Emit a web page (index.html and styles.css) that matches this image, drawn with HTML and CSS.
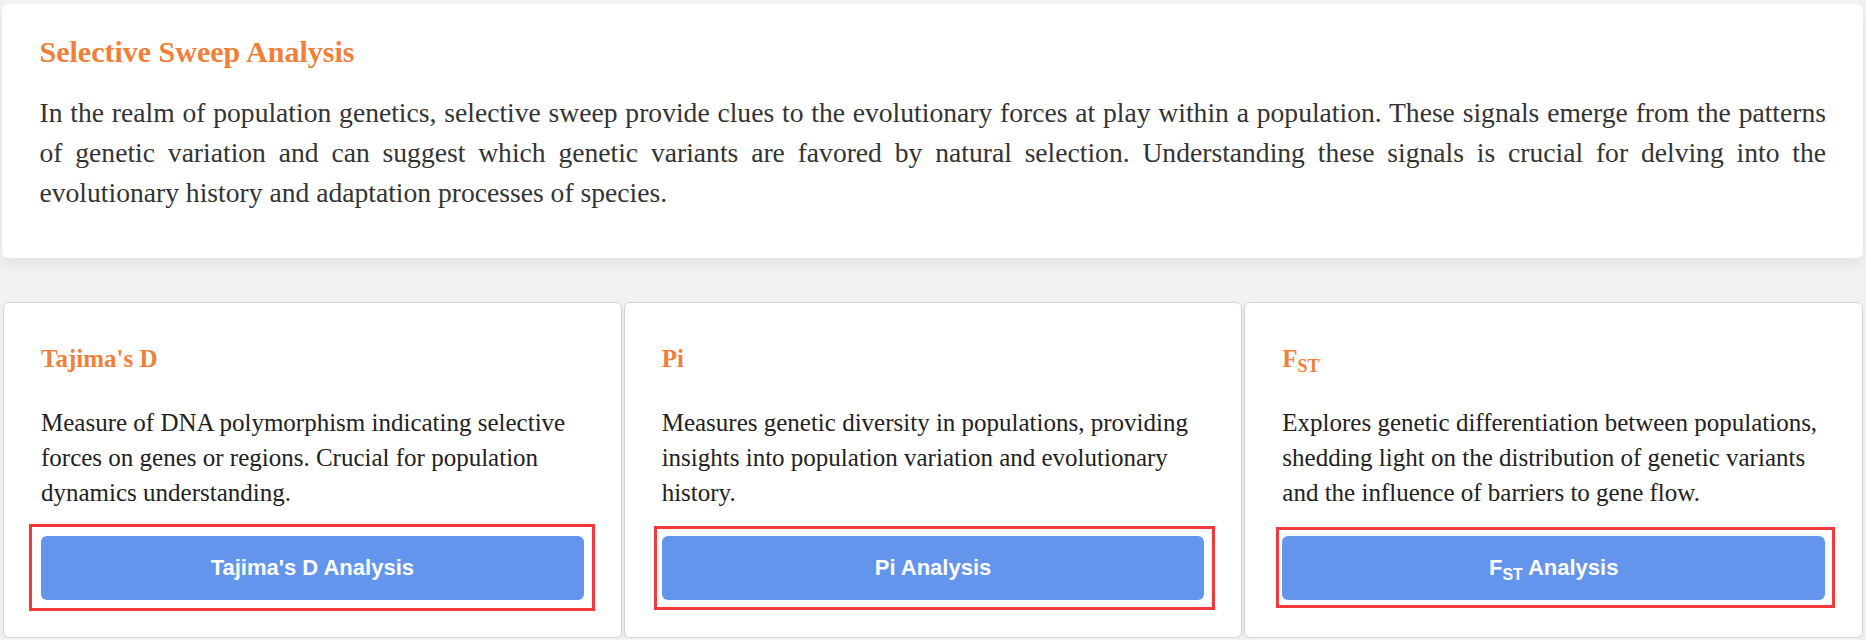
FILE: index.html
```html
<!DOCTYPE html>
<html lang="en">
<head>
<meta charset="utf-8">
<title>Selective Sweep Analysis</title>
<link rel="stylesheet" href="styles.css">
</head>
<body>
<main class="page">
  <section class="intro">
    <h2 class="intro-title">Selective Sweep Analysis</h2>
    <p class="intro-text">In the realm of population genetics, selective sweep provide clues to the evolutionary forces at play within a population. These signals emerge from the patterns of genetic variation and can suggest which genetic variants are favored by natural selection. Understanding these signals is crucial for delving into the evolutionary history and adaptation processes of species.</p>
  </section>
  <section class="cards">
    <article class="card">
      <h3 class="card-title">Tajima's D</h3>
      <p class="card-text">Measure of DNA polymorphism indicating selective forces on genes or regions. Crucial for population dynamics understanding.</p>
      <div class="btn-wrap mark-1"><button class="btn">Tajima's D Analysis</button></div>
    </article>
    <article class="card">
      <h3 class="card-title">Pi</h3>
      <p class="card-text">Measures genetic diversity in populations, providing insights into population variation and evolutionary history.</p>
      <div class="btn-wrap mark-2"><button class="btn">Pi Analysis</button></div>
    </article>
    <article class="card">
      <h3 class="card-title">F<sub>ST</sub></h3>
      <p class="card-text">Explores genetic differentiation between populations, shedding light on the distribution of genetic variants and the influence of barriers to gene flow.</p>
      <div class="btn-wrap mark-3"><button class="btn">F<sub>ST</sub> Analysis</button></div>
    </article>
  </section>
</main>
</body>
</html>
```

FILE: styles.css
```css
* { box-sizing: border-box; }
html, body { margin: 0; padding: 0; }
body {
  background: #f2f2f2;
  font-family: "Liberation Serif", "Times New Roman", serif;
  overflow: hidden;
}
.page {
  padding: 4px 3px 0 2px;
}
.intro {
  background: #fff;
  border-radius: 6px;
  box-shadow: 0 6px 14px rgba(0, 0, 0, 0.07);
  padding: 30px 37px 45px 37.5px;
}
.intro-title {
  margin: 0;
  font-size: 30px;
  line-height: 36px;
  font-weight: bold;
  color: #f07f3a;
}
.intro-text {
  margin: 23px 0 0;
  font-size: 27.6px;
  line-height: 40px;
  color: #333;
  text-align: justify;
}
.cards {
  margin-top: 44px;
  display: grid;
  grid-template-columns: repeat(3, 1fr);
  gap: 2px;
  padding-left: 1px;
}
.card {
  background: #fff;
  border: 1px solid #d4d4d4;
  border-radius: 6px;
  padding: 37px 37px 37px 37px;
  box-shadow: 0 2px 6px rgba(0, 0, 0, 0.05);
}
.card-title {
  margin: 0;
  font-size: 25px;
  line-height: 38px;
  font-weight: bold;
  color: #f07f3a;
}
.card-title sub {
  font-size: 0.72em;
  vertical-align: -0.3em;
  line-height: 0;
}
.card-text {
  margin: 27px 0 0;
  font-size: 25px;
  line-height: 35px;
  color: #222;
}
.btn-wrap {
  position: relative;
  margin-top: 26px;
}
.btn-wrap::after {
  content: "";
  position: absolute;
  border: 3px solid #f23a3a;
  pointer-events: none;
}
.mark-1::after { left: -12px; right: -11px; top: -12px; bottom: -11px; }
.mark-2::after { left: -8px; right: -11px; top: -10px; bottom: -10px; }
.mark-3::after { left: -6px; right: -10px; top: -9px; bottom: -8px; }
.btn {
  display: block;
  width: 100%;
  height: 64px;
  border: none;
  border-radius: 6px;
  background: #6495ed;
  color: #fff;
  font-family: "Liberation Sans", Arial, sans-serif;
  font-weight: bold;
  font-size: 22px;
  padding: 0;
  cursor: pointer;
}
.btn sub {
  font-size: 0.72em;
  vertical-align: -0.3em;
  line-height: 0;
}
```
